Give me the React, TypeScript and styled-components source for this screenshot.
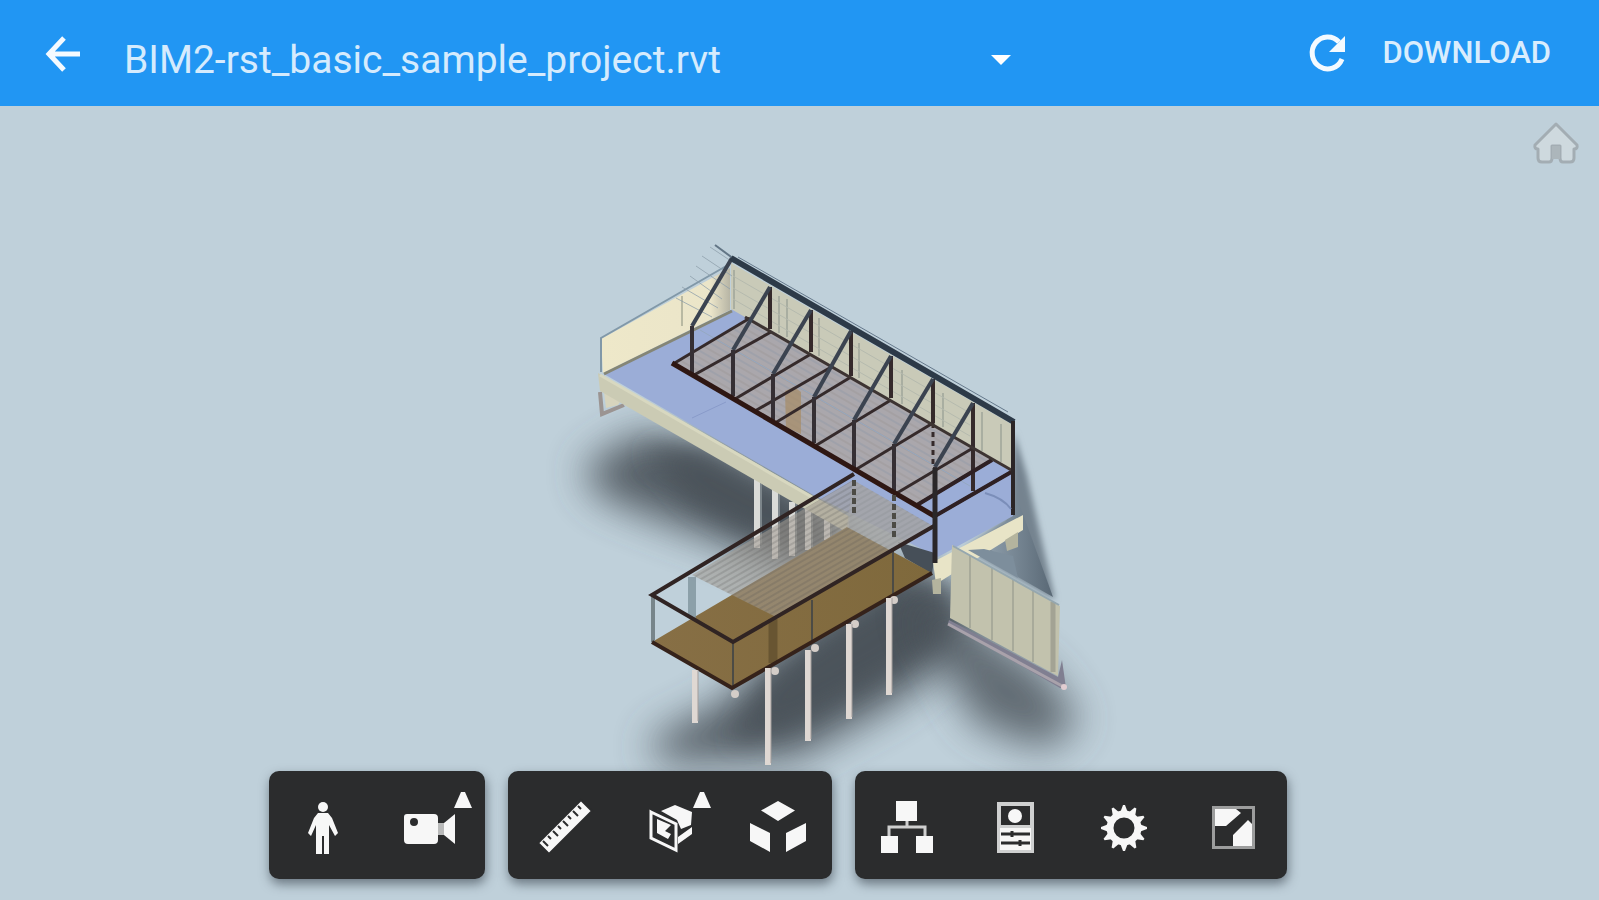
import React from "react";
import styled, { createGlobalStyle } from "styled-components";

const GlobalStyle = createGlobalStyle`
  * { box-sizing: border-box; }
  body { margin: 0; font-family: Roboto, "Liberation Sans", sans-serif; }
  button { font: inherit; }
`;

const Page = styled.div`
  display: flex;
  flex-direction: column;
  min-height: 100vh;
  background: #bfd0da;
`;

const Header = styled.header`
  display: flex;
  align-items: center;
  height: 106px;
  padding: 0 48px 0 38px;
  background: #2196f3;
  color: #e3f2fe;
`;

const HeaderButton = styled.button`
  display: flex;
  align-items: center;
  justify-content: center;
  padding: 0;
  border: 0;
  background: none;
  color: #f4faff;
  cursor: pointer;
`;

const DownloadButton = styled(HeaderButton)`
  margin-left: 34px;
  color: #d9edfd;
  font-size: 31px;
  font-weight: 500;
  line-height: 36px;
`;

const FilePicker = styled.div`
  display: grid;
  flex: 0 1 888px;
  align-items: center;
  margin: 0 auto 0 36px;
  padding-top: 14px;
  min-width: 0;
  > * { grid-area: 1 / 1; }
  > svg { justify-self: end; pointer-events: none; }
`;

const FileSelect = styled.select`
  width: 100%;
  height: 48px;
  padding: 0;
  border: 0;
  appearance: none;
  background: transparent;
  color: #d5ebfd;
  font-family: inherit;
  font-size: 39px;
  cursor: pointer;
`;

const Viewer = styled.main`
  position: relative;
  display: flex;
  flex: 1;
  justify-content: center;
  align-items: flex-start;
  overflow: hidden;
`;

const Model = styled.svg`
  display: block;
  flex: none;
  width: 641px;
  height: 680px;
  overflow: visible;
`;

const HomeButton = styled(HeaderButton)`
  position: absolute;
  top: 12px;
  right: 16px;
`;

const Dock = styled.nav`
  position: absolute;
  right: 0;
  bottom: 21px;
  left: 0;
  display: flex;
  justify-content: center;
  gap: 23px;
  padding-right: 43px;
`;

const ToolGroup = styled.div`
  display: flex;
  border-radius: 10px;
  background: #2b2c2d;
  box-shadow: 1px 5px 11px rgba(50, 60, 70, 0.6);
`;

const ToolButton = styled.button`
  width: 108px;
  height: 108px;
  padding: 0;
  border: 0;
  background: none;
  color: #f7f7f7;
  cursor: pointer;
  > svg { display: block; }
`;

function Tool({ label, menu, children }: { label: string; menu?: boolean; children: React.ReactNode }) {
  return (
    <ToolButton type="button" aria-label={label} aria-haspopup={menu ? "menu" : undefined}>
      <svg width="108" height="108" viewBox="0 0 108 108" fill="currentColor" aria-hidden="true">
        {children}
        {menu && <path d="M77 37 84 21H88L95 37Z" />}
      </svg>
    </ToolButton>
  );
}

const posts = [
  [732, 258, 692, 326, 374],
  [770, 287, 733, 350, 396],
  [811, 310, 773, 374, 420],
  [851, 331, 814, 397, 443],
  [891, 356, 854, 420, 468],
  [933, 379, 894, 444, 492],
  [973, 403, 935, 467, 516],
];

const beams = [
  [673, 364, 750, 318], [694, 375, 771, 332], [735, 399, 811, 354],
  [755, 411, 833, 366], [775, 423, 851, 377], [815, 446, 891, 400],
  [855, 470, 933, 423], [897, 493, 973, 448], [917, 505, 992, 460],
  [935, 516, 1013, 471],
];

const ridgePosts = [
  [770, 287, 329], [811, 310, 352], [851, 331, 376], [891, 356, 398], [933, 379, 423], [973, 403, 491],
];

const rearPiles = [[757, 478, 548], [775, 490, 559], [792, 502, 556], [808, 508, 550], [827, 515, 540]];
const frontPiles = [[695, 670, 723], [768, 668, 765], [808, 650, 741], [849, 624, 719], [889, 598, 695]];
const pileCaps = [[735, 694], [775, 671], [815, 648], [855, 624], [894, 600]];

function BuildingModel() {
  return (
    <Model viewBox="479 106 641 680" role="img" aria-label="Structural building model">
      <defs>
        <filter id="wide" x="-50%" y="-50%" width="200%" height="200%">
          <feGaussianBlur stdDeviation="20" />
        </filter>
        <filter id="soft" x="-50%" y="-50%" width="200%" height="200%">
          <feGaussianBlur stdDeviation="12" />
        </filter>
        <filter id="fine" x="-50%" y="-50%" width="200%" height="200%">
          <feGaussianBlur stdDeviation="3" />
        </filter>
        <pattern id="slats" width="8" height="5" patternUnits="userSpaceOnUse" patternTransform="rotate(-30)">
          <path d="M0 2H8" stroke="#4c4a4b" strokeWidth="1" opacity=".38" />
        </pattern>
        <pattern id="roof" width="20" height="12" patternUnits="userSpaceOnUse" patternTransform="rotate(30)">
          <path d="M0 2H20" stroke="#7f8ea3" strokeWidth="1" opacity=".5" />
          <path d="M0 8H20" stroke="#80776f" strokeWidth="1" opacity=".3" />
        </pattern>
        <linearGradient id="wall" x1="0" x2="1" y1="0" y2="0">
          <stop offset="0" stopColor="#eee8c9" />
          <stop offset=".85" stopColor="#ebe5c9" />
          <stop offset="1" stopColor="#b7b5a5" />
        </linearGradient>
        <linearGradient id="slope" x1="0" x2="1" y1="0" y2="0">
          <stop offset="0" stopColor="#8b9ba8" />
          <stop offset="1" stopColor="#596875" />
        </linearGradient>
        <linearGradient id="deck" x1="0" x2="1" y1="0" y2="0">
          <stop offset="0" stopColor="#876f45" />
          <stop offset="1" stopColor="#7f693c" />
        </linearGradient>
      </defs>

      <g fill="#485158">
        <path d="M582 468 640 432 710 446 800 490 860 540 800 572 735 548 650 516 600 496Z" filter="url(#wide)" opacity=".9" />
        <path d="M645 450 700 448 760 480 830 520 830 560 745 530 690 500Z" filter="url(#soft)" opacity=".85" />
        <path d="M900 560 945 580 965 645 900 700 795 758 660 762 650 740 720 705 810 620Z" filter="url(#wide)" opacity=".92" />
        <path d="M910 580 955 590 955 630 885 672 795 722 730 745 770 675Z" filter="url(#soft)" opacity=".75" />
        <path d="M910 605 960 615 1045 672 1080 722 1045 750 975 724Z" filter="url(#wide)" opacity=".8" />
      </g>

      <path d="M1014 432 1027 475 1055 600 965 549 1010 515Z" fill="#74838f" filter="url(#fine)" />
      <path d="M1018 500 1053 597 1018 577 990 549Z" fill="url(#slope)" />

      {rearPiles.map(([x, y, end]) => (
        <g key={x}>
          <path d={`M${x} ${y}V${end}`} stroke="#dadbd8" strokeWidth="6" />
          <path d={`M${x + 4} ${y}V${end - 3}`} stroke="#7c858a" strokeWidth="2" />
        </g>
      ))}

      <path d="M600 392 602 414 624 405" fill="none" stroke="#9b9492" strokeWidth="4" />
      <path d="M604 392 622 399 618 405 606 408Z" fill="#d7d4bd" />

      <path d="M604 374 733 309 1013 471V516L938 557 815 496Z" fill="#9badd7" />
      <path d="M692 418 726 402" stroke="#899bca" strokeWidth="1" />
      <path d="M601 339 730 268V310L603 373Z" fill="url(#wall)" />
      <path d="M601 372V338L728 265" fill="none" stroke="#8198a8" strokeWidth="2" />
      <path d="M604 374 732 311" stroke="#858676" strokeWidth="3" />
      <path d="M682 296V326" stroke="#b9b9a2" strokeWidth="2" />
      <path d="M598 373 815 497 850 517 848 533 800 506 600 391Z" fill="#cbcbb4" />
      <path d="M600 375 815 499" stroke="#d8d8c0" strokeWidth="3" />
      <path d="M731 263 1013 425V471L731 309Z" fill="#c9cab8" />
      <path d="M734 270V309M779 296V333M787 299V337M819 318V356M859 343V378M902 370V404M943 393V427M982 412V451M1001 424V462" stroke="#a9aea1" strokeWidth="2" />
      <g stroke="#b5baae" strokeWidth="1">
        <path d="M733 276 970 413M733 288 970 425M733 299 970 436" />
      </g>
      <g stroke="#8c9da9" strokeWidth="1" opacity=".75">
        <path d="M710 247 734 263M702 256 732 276M696 266 730 289M690 276 722 299M682 287 718 308M676 298 712 317" />
      </g>

      <path d="M673 364 750 318 993 459 917 505Z" fill="#aaa7ac" />
      <path d="M673 364 750 318 993 459 917 505Z" fill="url(#roof)" />
      <path d="M785 391 794 387 801 392V434L786 427Z" fill="#a68b65" opacity=".7" />
      <path d="M700 330 970 486" stroke="#95a8c1" strokeWidth="1" />
      <g stroke="#352a2b" strokeWidth="3">
        {beams.map(([x1, y1, x2, y2]) => <path key={x1} d={`M${x1} ${y1}L${x2} ${y2}`} />)}
        {ridgePosts.map(([x, top, end]) => <path key={x} d={`M${x} ${top}V${end}`} strokeWidth="4" />)}
        <path d="M933 423V466" strokeDasharray="5 4" />
      </g>
      <path d="M917 505 992 460M935 516 1013 471" stroke="#2e2023" strokeWidth="4" />
      <path d="M745 317 1013 471" stroke="#3d3432" strokeWidth="3" />
      {posts.map(([rx, ry, x, y, end]) => (
        <g key={rx} fill="none">
          <path d={`M${rx} ${ry}L${x} ${y}`} stroke="#3b4350" strokeWidth="4" />
          <path d={`M${x} ${y}V${end}`} stroke="#352f34" strokeWidth="4" />
        </g>
      ))}
      <path d="M672 363 936 517" stroke="#2e1713" strokeWidth="5" />
      <path d="M715 245 734 259" stroke="#627585" strokeWidth="2" />
      <path d="M731 258 990 408 1014 422" fill="none" stroke="#2d3a48" strokeWidth="6" />
      <path d="M738 257 1008 412" stroke="#65788b" strokeWidth="1" />
      <path d="M1013 421V515" stroke="#2b2526" strokeWidth="4" />
      <path d="M985 493Q1003 498 1011 509" fill="none" stroke="#7b8eb9" strokeWidth="2" />

      <path d="M898 542 935 553 932 574 905 558Z" fill="#464f58" />
      <path d="M933 562 1023 515V530L936 584Z" fill="#e8e4c7" />
      <path d="M1005 540 1018 532V547L1007 551ZM932 580 941 578V594H933Z" fill="#b4b49e" />
      <path d="M968 550 984 549 1013 556 1018 578Z" fill="#7d8e9c" />

      <path d="M652 642 847 527 932 573 732 688Z" fill="url(#deck)" />
      <path d="M692 575 853 480 933 526 776 617Z" fill="#a29b93" opacity=".56" />
      <path d="M692 575 853 480 933 526 776 617Z" fill="url(#slats)" />
      <path d="M853 480 932 526 893 550 847 527Z" fill="#a6a7aa" opacity=".55" />
      <path d="M692 577V618" stroke="#7c9099" strokeWidth="8" opacity=".75" />
      <path d="M773 619V663" stroke="#62502f" strokeWidth="9" opacity=".8" />
      <g stroke="#4c4b45" strokeWidth="2">
        <path d="M733 643V688M812 600V642M893 550V596" />
        <path d="M653 596V642" stroke="#77858a" strokeWidth="4" />
        <path d="M854 480V514M894 495V540" strokeWidth="4" strokeDasharray="6 3" />
      </g>
      <path d="M854 474 652 595 733 642 934 526" fill="none" stroke="#302423" strokeWidth="4" />
      <path d="M652 642 732 688 932 573" fill="none" stroke="#35221a" strokeWidth="4" />
      <path d="M935 468V563" stroke="#2a2729" strokeWidth="5" />

      {pileCaps.map(([x, y]) => <circle key={x} cx={x} cy={y} r="4" fill="#d4cdc8" />)}
      {frontPiles.map(([x, y, end]) => (
        <g key={x}>
          <path d={`M${x} ${y}V${end}`} stroke="#dfd8d3" strokeWidth="6" />
          <path d={`M${x + 3} ${y}V${end - 2}`} stroke="#a29d9b" strokeWidth="1" />
        </g>
      ))}

      <path d="M949 620 1058 677 1062 660 1066 688 1060 688 948 624Z" fill="#807f91" />
      <path d="M948 624 1064 687" stroke="#a9a2ab" strokeWidth="3" />
      <path d="M952 545 1060 606 1058 676 950 618Z" fill="#c2c2ad" />
      <path d="M970 556V628M992 568V640M1013 580V651M1033 591V662" stroke="#a8aa9a" strokeWidth="2" />
      <path d="M1053 602V672" stroke="#a3a394" strokeWidth="5" />
      <path d="M953 546 1059 605" stroke="#95a7af" strokeWidth="2" />
      <circle cx="1064" cy="687" r="3" fill="#e1cdd1" />
    </Model>
  );
}

export default function App() {
  return (
    <Page>
      <GlobalStyle />
      <Header>
        <HeaderButton type="button" aria-label="Back">
          <svg width="50" height="50" viewBox="0 0 50 50" fill="none" stroke="currentColor" strokeWidth="5" aria-hidden="true">
            <path d="M26 10 11 26 26 42M11 26H42" />
          </svg>
        </HeaderButton>
        <FilePicker>
          <FileSelect aria-label="Model file" defaultValue="rst">
            <option value="rst">BIM2-rst_basic_sample_project.rvt</option>
          </FileSelect>
          <svg width="22" height="12" viewBox="0 0 22 12" fill="#fff" aria-hidden="true">
            <path d="M1 1H21L11 11Z" />
          </svg>
        </FilePicker>
        <HeaderButton type="button" aria-label="Refresh">
          <svg width="44" height="44" viewBox="0 0 44 44" aria-hidden="true">
            <path d="M34 11A15.500 16 0 1 0 37 28" fill="none" stroke="currentColor" strokeWidth="5" />
            <path d="M40 5V21H24Z" fill="currentColor" />
          </svg>
        </HeaderButton>
        <DownloadButton type="button">DOWNLOAD</DownloadButton>
      </Header>
      <Viewer>
        <BuildingModel />
        <HomeButton type="button" aria-label="Home view">
          <svg width="54" height="50" viewBox="0 0 54 50" aria-hidden="true">
            <path d="M27 6 6 27Q5 31 9 31V40Q9 44 13 44H20Q23 44 23 40V28H31V40Q31 44 34 44H41Q45 44 45 40V31Q49 31 48 27Z" fill="#ced9de" stroke="#a3adb3" strokeWidth="3" strokeLinejoin="round" />
            <path d="M23 28H31V41H23Z" fill="#acb6bb" />
          </svg>
        </HomeButton>
        <Dock aria-label="Viewer tools">
          <ToolGroup>
            <Tool label="First person">
              <circle cx="54" cy="36" r="5" />
              <path d="M49 42H59L63 47 69 62 66 65 60 54V83H55V65H53V83H47V54L42 65 39 62 45 47Z" />
            </Tool>
            <Tool label="Camera" menu>
              <path fillRule="evenodd" d="M30 43H57Q61 43 61 47V69Q61 73 57 73H31Q27 73 27 69V46Q27 43 30 43ZM37 47A4 4 0 1 0 37 55 4 4 0 1 0 37 47Z" />
              <path d="M61 52H67V64H61Z" opacity=".7" />
              <path d="M67 52 78 43V73L67 64Z" />
            </Tool>
          </ToolGroup>
          <ToolGroup>
            <Tool label="Measure">
              <path d="M73 29 84 40 41 83 30 72ZM35 70 40 75M40 65 43 68M45 60 50 65M50 55 53 58M55 50 60 55M60 45 63 48M65 40 70 45M70 35 73 38" stroke="#2b2c2d" strokeWidth="2" />
            </Tool>
            <Tool label="Section analysis" menu>
              <path d="M45 40 59 34 76 41 75 54 65 58 61 49ZM62 66 76 56V63L62 73Z" />
              <path d="M35 41 60 53V79L35 67Z" fill="none" stroke="currentColor" strokeWidth="3" />
              <path d="M41 48 55 54 49 60 55 63 52 68 41 62Z" />
            </Tool>
            <Tool label="Explode model">
              <path d="M54 30 71 39.500 54 50 37 39.500ZM26 52 46 62V81L26 70ZM82 52 62 62V81L82 70Z" />
            </Tool>
          </ToolGroup>
          <ToolGroup>
            <Tool label="Model browser">
              <path d="M41 30H62V50H41ZM26 65H43V82H26ZM61 65H78V82H61Z" />
              <path d="M52 50V56M34 65V56H70V65" fill="none" stroke="#cfcfcf" strokeWidth="3" />
            </Tool>
            <Tool label="Properties">
              <path fill="#cfd0d0" d="M34 31H71V82H34Z" />
              <path fill="#2b2c2d" d="M38 35H67V54H38Z" />
              <path d="M37 57H68V79H37Z" />
              <circle cx="52" cy="45" r="7" />
              <path d="M38 63H67M38 72H67M49 60V66M57 69V75" stroke="#2b2c2d" strokeWidth="3" />
            </Tool>
            <Tool label="Settings">
              <circle cx="53" cy="57" r="14" fill="none" stroke="currentColor" strokeWidth="7" />
              {[0, 30, 60, 90, 120, 150, 180, 210, 240, 270, 300, 330].map((angle) => (
                <path key={angle} d="M49 42 52 34H54L57 42Z" transform={`rotate(${angle} 53 57)`} />
              ))}
            </Tool>
            <Tool label="Full screen">
              <path d="M33 35H76V78H33Z" fill="#9c9d9d" />
              <path d="M36 38H73V75H36Z" />
              <path d="M36 55H47L62 42 57 38H73V53L69 49 54 64V75H36Z" fill="#2b2c2d" />
            </Tool>
          </ToolGroup>
        </Dock>
      </Viewer>
    </Page>
  );
}
